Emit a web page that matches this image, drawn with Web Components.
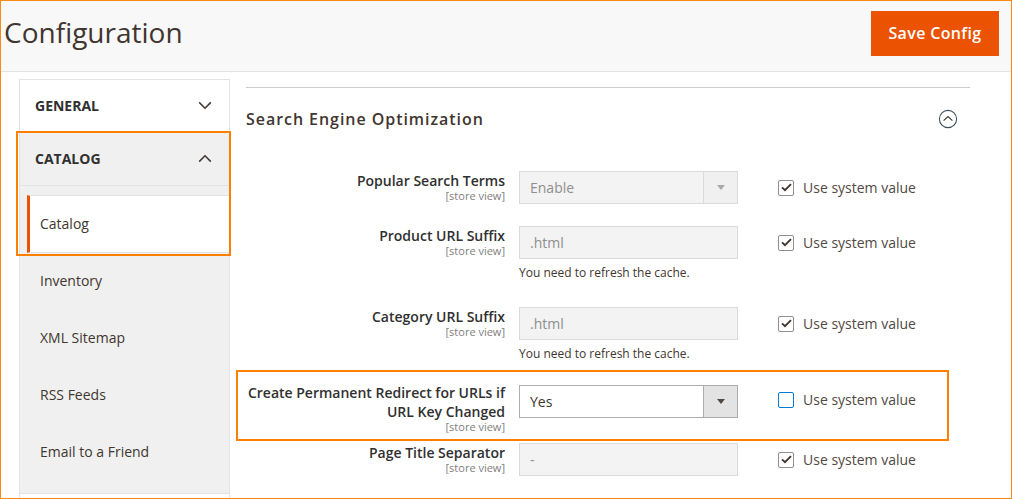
<!DOCTYPE html>
<html lang="en">
<head>
<meta charset="utf-8">
<title>Configuration</title>
<style>
  html, body { margin: 0; padding: 0; background: #fff; }
  body { font-family: "Open Sans", "Liberation Sans", sans-serif; color: #303030; }
</style>
</head>
<body>

<admin-page>
  <page-header slot="header" heading="Configuration">
    <save-button>Save Config</save-button>
  </page-header>

  <config-nav slot="nav">
    <nav-section label="General"></nav-section>
    <nav-section label="Catalog" open>
      <nav-item active>Catalog</nav-item>
      <nav-item>Inventory</nav-item>
      <nav-item>XML Sitemap</nav-item>
      <nav-item>RSS Feeds</nav-item>
      <nav-item>Email to a Friend</nav-item>
    </nav-section>
  </config-nav>

  <config-section slot="main" heading="Search Engine Optimization">
    <config-row label="Popular Search Terms" type="select" value="Enable" disabled checked after="22"></config-row>
    <config-row label="Product URL Suffix" type="input" value=".html" disabled checked note="You need to refresh the cache." after="25"></config-row>
    <config-row label="Category URL Suffix" type="input" value=".html" disabled checked note="You need to refresh the cache." after="22"></config-row>
    <config-row label="Create Permanent Redirect for URLs if URL Key Changed" type="select" value="Yes" focus after="10" lift="2"></config-row>
    <config-row label="Page Title Separator" type="input" value="-" disabled checked after="0"></config-row>
  </config-section>

  <mark-box slot="marks" style="left:15px;top:130px;width:215px;height:125px"></mark-box>
  <mark-box slot="marks" style="left:235px;top:369px;width:713px;height:71px"></mark-box>
</admin-page>

<script>
// Shared font stack, every shadow root inherits it from body
const chevron = (up) => `
  <svg width="14" height="9" viewBox="0 0 14 9" aria-hidden="true">
    <path d="${up ? "M1.2 7.6 7 1.8l5.8 5.8" : "M1.2 1.4 7 7.2l5.8-5.8"}" fill="none" stroke="#41362f" stroke-width="1.5"/>
  </svg>`;

/**
 * The page frame: orange outline, header on top, nav and main below
 */
class AdminPage extends HTMLElement {
  constructor() {
    super();
    this.attachShadow({ mode: "open" }).innerHTML = `
      <style>
        :host {
          display: block;
          position: relative;
          box-sizing: border-box;
          width: 1012px;
          height: 499px;
          border: 1px solid #fb8a14;
          overflow: hidden;
          background: #fff;
        }
        .body {
          display: flex;
          padding: 7px 0 0 18px;
        }
      </style>
      <slot name="header"></slot>
      <div class="body">
        <slot name="nav"></slot>
        <slot name="main"></slot>
      </div>
      <slot name="marks"></slot>
    `;
  }
}

class PageHeader extends HTMLElement {
  constructor() {
    super();
    this.attachShadow({ mode: "open" }).innerHTML = `
      <style>
        :host {
          display: flex;
          align-items: flex-start;
          justify-content: space-between;
          box-sizing: border-box;
          height: 71px;
          padding: 10px 12px 0 3px;
          background: #f8f8f8;
          border-bottom: 1px solid #e3e3e3;
        }
        h1 {
          margin: -1px 0 0;
          font-size: 28px;
          line-height: 44px;
          font-weight: 400;
          color: #41362f;
        }
      </style>
      <h1>${this.getAttribute("heading")}</h1>
      <slot></slot>
    `;
  }
}

class SaveButton extends HTMLElement {
  constructor() {
    super();
    this.attachShadow({ mode: "open" }).innerHTML = `
      <style>
        :host {
          display: flex;
          align-items: center;
          justify-content: center;
          box-sizing: border-box;
          width: 128px;
          height: 45px;
          padding-bottom: 2px;
          background: #eb5202;
          color: #fff;
          font-size: 16px;
          font-weight: 600;
          letter-spacing: .35px;
        }
      </style>
      <slot></slot>
    `;
  }
}

class ConfigNav extends HTMLElement {
  constructor() {
    super();
    this.attachShadow({ mode: "open" }).innerHTML = `
      <style>
        :host {
          display: block;
          box-sizing: border-box;
          flex: none;
          width: 211px;
          height: 500px;
          border: 1px solid #e3e3e3;
          border-bottom: 0;
        }
      </style>
      <slot></slot>
    `;
  }
}

class NavSection extends HTMLElement {
  constructor() {
    super();
    const open = this.hasAttribute("open");
    this.attachShadow({ mode: "open" }).innerHTML = `
      <style>
        :host { display: block; }
        .title {
          display: flex;
          align-items: center;
          justify-content: space-between;
          box-sizing: border-box;
          height: ${open ? 54 : 52}px;
          padding: 0 17px ${open ? 0 : 2}px 15px;
          font-size: 14px;
          font-weight: 700;
          text-transform: uppercase;
          color: #303030;
          background: ${open ? "#f0f0f0" : "#fff"};
          ${open ? "border-bottom: 1px solid #e3e3e3;" : ""}
        }
        .items {
          display: ${open ? "block" : "none"};
          box-sizing: border-box;
          height: 308px;
          padding-top: 9px;
          background: #f0f0f0;
          border-bottom: 1px solid #e3e3e3;
        }
      </style>
      <div class="title"><span>${this.getAttribute("label")}</span>${chevron(open)}</div>
      <div class="items"><slot></slot></div>
    `;
  }
}

class NavItem extends HTMLElement {
  constructor() {
    super();
    const active = this.hasAttribute("active");
    this.attachShadow({ mode: "open" }).innerHTML = `
      <style>
        :host {
          display: flex;
          align-items: center;
          box-sizing: border-box;
          height: 57px;
          margin-left: 7px;
          padding: 0 0 2px ${active ? 10 : 13}px;
          font-size: 14px;
          color: #41362f;
          ${active ? "height: 58px; background: #fff; border-left: 3px solid #eb5202; border-top: 1px solid #e3e3e3; border-bottom: 1px solid #e3e3e3;" : ""}
        }
      </style>
      <slot></slot>
    `;
  }
}

class ConfigSection extends HTMLElement {
  constructor() {
    super();
    this.attachShadow({ mode: "open" }).innerHTML = `
      <style>
        :host {
          display: block;
          box-sizing: border-box;
          width: 724px;
          margin: 8px 0 0 16px;
          border-top: 1px solid #cccccc;
        }
        .head {
          display: flex;
          align-items: center;
          justify-content: space-between;
          height: 62px;
          padding-right: 12px;
        }
        h2 {
          margin: 0;
          font-size: 16px;
          font-weight: 600;
          letter-spacing: .95px;
          color: #41362f;
        }
        .rows { padding-top: 21px; }
      </style>
      <div class="head">
        <h2>${this.getAttribute("heading")}</h2>
        <svg width="20" height="20" viewBox="0 0 20 20" aria-hidden="true">
          <circle cx="10" cy="10" r="8.6" fill="none" stroke="#41525e" stroke-width="1.1"/>
          <path d="M5.6 11.6 10 7.6l4.4 4" fill="none" stroke="#41362f" stroke-width="1.1"/>
        </svg>
      </div>
      <div class="rows"><slot></slot></div>
    `;
  }
}

/**
 * One settings row: label column, the control, then "Use system value"
 */
class ConfigRow extends HTMLElement {
  constructor() {
    super();
    const type = this.getAttribute("type");
    const disabled = this.hasAttribute("disabled");
    const checked = this.hasAttribute("checked");
    const focus = this.hasAttribute("focus");
    const note = this.getAttribute("note");
    const after = this.getAttribute("after") || 0;
    const lift = this.getAttribute("lift") || 0;

    this.attachShadow({ mode: "open" }).innerHTML = `
      <style>
        :host {
          display: grid;
          grid-template-columns: 259px 219px auto;
          column-gap: 14px;
          align-items: start;
          padding-bottom: ${after}px;
        }
        .label {
          margin-top: ${0 - lift}px;
          text-align: right;
          font-size: 14px;
          line-height: 19px;
          font-weight: 600;
          color: #303030;
        }
        .scope {
          display: block;
          font-size: 11px;
          line-height: 12px;
          font-weight: 400;
          color: #808080;
        }
        .field {
          display: flex;
          box-sizing: border-box;
          height: 33px;
          border: 1px solid ${disabled ? "#dadada" : "#adadad"};
          background: ${disabled ? "#f3f3f3" : "#fff"};
          font-size: 14px;
          color: ${disabled ? "#8f8f8f" : "#41362f"};
        }
        .value {
          flex: 1;
          padding-left: 10px;
          line-height: 31px;
        }
        .arrow {
          flex: none;
          display: flex;
          align-items: center;
          justify-content: center;
          width: 33px;
          border-left: 1px solid ${disabled ? "#dadada" : "#adadad"};
          background: ${disabled ? "#f0f0f0" : "#e3e3e3"};
        }
        .note {
          margin-top: 4px;
          font-size: 12px;
          line-height: 19px;
          color: #41362f;
        }
        .system {
          display: flex;
          align-items: center;
          gap: 9px;
          margin-left: 26px;
          height: ${focus ? 29 : 33}px;
          font-size: 14px;
          color: #514943;
        }
        .box {
          display: flex;
          align-items: center;
          justify-content: center;
          box-sizing: border-box;
          width: 16px;
          height: 16px;
          border-radius: 2px;
          border: 1px solid ${focus ? "#007bdb" : "#8f8f8f"};
          background: #fff;
        }
      </style>
      <div class="label">
        ${this.getAttribute("label")}
        <span class="scope">[store view]</span>
      </div>
      <div>
        <div class="field">
          <span class="value">${this.getAttribute("value")}</span>
          ${type === "select" ? `<span class="arrow">
            <svg width="8" height="5" viewBox="0 0 8 5" aria-hidden="true">
              <path d="M0 0h8L4 5z" fill="${disabled ? "#a8a8a8" : "#514943"}"/>
            </svg>
          </span>` : ""}
        </div>
        ${note ? `<div class="note">${note}</div>` : ""}
      </div>
      <div class="system">
        <span class="box">
          ${checked ? `<svg width="11" height="9" viewBox="0 0 11 9" aria-hidden="true">
            <path d="M1 4.4 4 7.2 10 1.2" fill="none" stroke="#41362f" stroke-width="1.9"/>
          </svg>` : ""}
        </span>
        <span>Use system value</span>
      </div>
    `;
  }
}

// Orange callout drawn over the screenshot
class MarkBox extends HTMLElement {
  constructor() {
    super();
    this.attachShadow({ mode: "open" }).innerHTML = `
      <style>
        :host {
          display: block;
          position: absolute;
          box-sizing: border-box;
          border: 2px solid #ff8000;
          pointer-events: none;
        }
      </style>
    `;
  }
}

customElements.define("admin-page", AdminPage);
customElements.define("page-header", PageHeader);
customElements.define("save-button", SaveButton);
customElements.define("config-nav", ConfigNav);
customElements.define("nav-section", NavSection);
customElements.define("nav-item", NavItem);
customElements.define("config-section", ConfigSection);
customElements.define("config-row", ConfigRow);
customElements.define("mark-box", MarkBox);
</script>
</body>
</html>
